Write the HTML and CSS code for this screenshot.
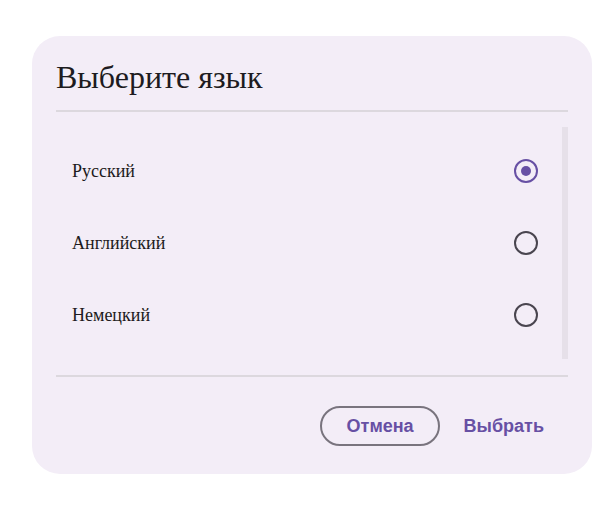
FILE: index.html
```html
<!DOCTYPE html>
<html lang="ru">
<head>
<meta charset="utf-8">
<link rel="stylesheet" href="styles.css">
</head>
<body>
<div class="dialog">
  <h1 class="title">Выберите язык</h1>
  <div class="divider"></div>
  <div class="list-wrap">
    <ul class="list">
      <li class="row">
        <span class="label">Русский</span>
        <svg class="radio" width="24" height="24" viewBox="0 0 24 24"><circle cx="12" cy="12" r="11" fill="none" stroke="#6750a4" stroke-width="2"/><circle cx="12" cy="12" r="5" fill="#6750a4"/></svg>
      </li>
      <li class="row">
        <span class="label">Английский</span>
        <svg class="radio" width="24" height="24" viewBox="0 0 24 24"><circle cx="12" cy="12" r="11" fill="none" stroke="#49454f" stroke-width="2"/></svg>
      </li>
      <li class="row">
        <span class="label">Немецкий</span>
        <svg class="radio" width="24" height="24" viewBox="0 0 24 24"><circle cx="12" cy="12" r="11" fill="none" stroke="#49454f" stroke-width="2"/></svg>
      </li>
    </ul>
    <div class="scrollbar"></div>
  </div>
  <div class="divider"></div>
  <div class="actions">
    <button class="btn btn-outlined">Отмена</button>
    <button class="btn btn-text">Выбрать</button>
  </div>
</div>
</body>
</html>
```
FILE: styles.css
```css
html, body {
  margin: 0;
  padding: 0;
  background: #ffffff;
}
body {
  padding: 36px 20px 0 32px;
  font-family: "Liberation Serif", serif;
}
.dialog {
  width: 560px;
  height: 438px;
  box-sizing: border-box;
  background: #f3edf7;
  border-radius: 28px;
  padding: 0 24px;
  display: flex;
  flex-direction: column;
}
.title {
  margin: 0;
  height: 74px;
  line-height: 82px;
  font-size: 32px;
  font-weight: normal;
  color: #1d1b20;
}
.divider {
  height: 2px;
  background: #dcd8de;
}
.list-wrap {
  display: flex;
  height: 263px;
  box-sizing: border-box;
  padding: 15px 0 16px;
}
.list {
  list-style: none;
  margin: 0;
  padding: 8px 0 0;
  flex: 1;
}
.row {
  height: 72px;
  display: flex;
  align-items: center;
  justify-content: space-between;
  padding: 0 24px 0 16px;
}
.label {
  font-size: 18px;
  color: #1d1b20;
}
.radio {
  display: block;
}
.scrollbar {
  width: 6px;
  background: #e6e0e9;
}
.actions {
  display: flex;
  justify-content: flex-end;
  padding-top: 29px;
}
.btn {
  height: 40px;
  box-sizing: border-box;
  font-family: "Liberation Sans", sans-serif;
  font-weight: bold;
  font-size: 18px;
  color: #6750a4;
  background: transparent;
  border-radius: 20px;
  cursor: pointer;
}
.btn-outlined {
  border: 2px solid #79747e;
  padding: 0 24px 0 25px;
}
.btn-text {
  border: none;
  padding: 0 24px;
}
```
